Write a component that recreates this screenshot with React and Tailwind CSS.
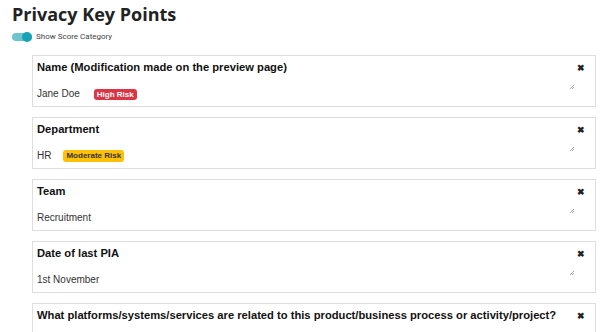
import { useState } from 'react'

const fields = [
  { label: 'Name (Modification made on the preview page)', value: 'Jane Doe', badge: 'high' },
  { label: 'Department', value: 'HR', badge: 'moderate' },
  { label: 'Team', value: 'Recruitment' },
  { label: 'Date of last PIA', value: '1st November' },
  { label: 'What platforms/systems/services are related to this product/business process or activity/project?', value: '' },
]

function Badge({ kind }) {
  if (kind === 'high') return <span className="ml-[14px] rounded-[3px] bg-[#dc3545] px-[3px] text-[8px] leading-[11px] font-bold text-white">High Risk</span>
  if (kind === 'moderate') return <span className="ml-[12px] rounded-[3px] bg-[#ffc107] px-[3px] text-[8px] leading-[12px] font-bold text-[#333]">Moderate Risk</span>
  return null
}

function Field({ f }) {
  return (
    <div className="relative h-[52px] border border-[#dedede] bg-white pl-[4px] pr-[10px]">
      <div className="flex items-start justify-between pt-[3px]">
        <span className="text-[11.2px] leading-[16px] font-bold text-[#111]">{f.label}</span>
        <span className="mt-[4px] text-[9px] leading-[10px] font-bold text-[#222]">✖</span>
      </div>
      <div className="mt-[12px] flex items-center text-[10px] leading-[14px] text-[#333]">
        <span>{f.value}</span>
        {f.badge && <Badge kind={f.badge} />}
      </div>
      <svg className="absolute right-[20px] top-[28px]" width="6" height="6" viewBox="0 0 6 6">
        <path d="M5 1 L1 5 M5 3 L3 5" stroke="#aaa" strokeWidth="1" />
      </svg>
    </div>
  )
}

export default function App() {
  const [on, setOn] = useState(true)
  return (
    <div className="h-[332px] w-[602px] overflow-hidden bg-white" style={{ fontFamily: '"Liberation Sans", Arial, sans-serif' }}>
      <h1 className="pl-[12px] pt-[3px] text-[18px] leading-[22px] font-bold text-[#222]" style={{ fontFamily: '"Open Sans", sans-serif' }}>Privacy Key Points</h1>
      <label className="mt-[7px] flex h-[10px] items-center gap-[4px] pl-[12px]">
        <button onClick={() => setOn(!on)} className={`relative h-[8px] w-[20px] rounded-full ${on ? 'bg-[#6cc5cc]' : 'bg-gray-300'}`}>
          <span className={`absolute top-[-1px] h-[10px] w-[10px] rounded-full ${on ? 'right-0 bg-[#17a2b8]' : 'left-0 bg-white'}`} />
        </button>
        <span className="text-[8px] text-[#444]" style={{ fontFamily: '"Roboto", sans-serif' }}>Show Score Category</span>
      </label>
      <div className="ml-[32px] mr-[6px] mt-[13px] flex flex-col gap-[10px]">
        {fields.map(f => <Field key={f.label} f={f} />)}
      </div>
    </div>
  )
}
